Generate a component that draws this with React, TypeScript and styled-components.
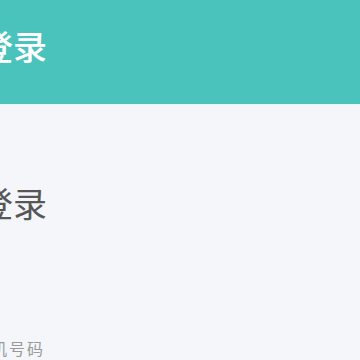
import styled, { createGlobalStyle } from "styled-components";

const GlobalStyle = createGlobalStyle`
    html, body {
        margin: 0;
        padding: 0;
        background-color: #f5f6fa;
        overflow: hidden;
    }
    body {
        font-family: "Noto Sans CJK SC", "Noto Sans", sans-serif;
    }
`;

const Page = styled.div`
    width: 360px;
    height: 360px;
    display: flex;
    flex-direction: column;
    background-color: #f5f6fa;
`;

const Header = styled.header`
    height: 105px;
    flex-shrink: 0;
    box-sizing: border-box;
    background-color: #4ac3bd;
    border-bottom: 1px solid #e3f4f3;
    display: flex;
    align-items: center;
    padding-bottom: 12px;
`;

const HeaderTitle = styled.h1`
    margin: 0 0 0 -21px;
    font-size: 34px;
    line-height: 1;
    font-weight: 500;
    color: #ffffff;
`;

const Body = styled.main`
    display: flex;
    flex-direction: column;
    margin-left: -21px;
`;

const Title = styled.h2`
    margin: 81px 0 0 0;
    font-size: 34px;
    line-height: 1;
    font-weight: 400;
    color: #575757;
`;

const FieldLabel = styled.label`
    margin: 120px 0 0 -6px;
    font-size: 16px;
    line-height: 1;
    letter-spacing: 2px;
    color: #9a9a9a;
`;

const App = () => {
    return (
        <>
            <GlobalStyle />
            <Page>
                <Header>
                    <HeaderTitle>登录</HeaderTitle>
                </Header>
                <Body>
                    <Title>登录</Title>
                    <FieldLabel>手机号码</FieldLabel>
                </Body>
            </Page>
        </>
    );
};

export default App;
